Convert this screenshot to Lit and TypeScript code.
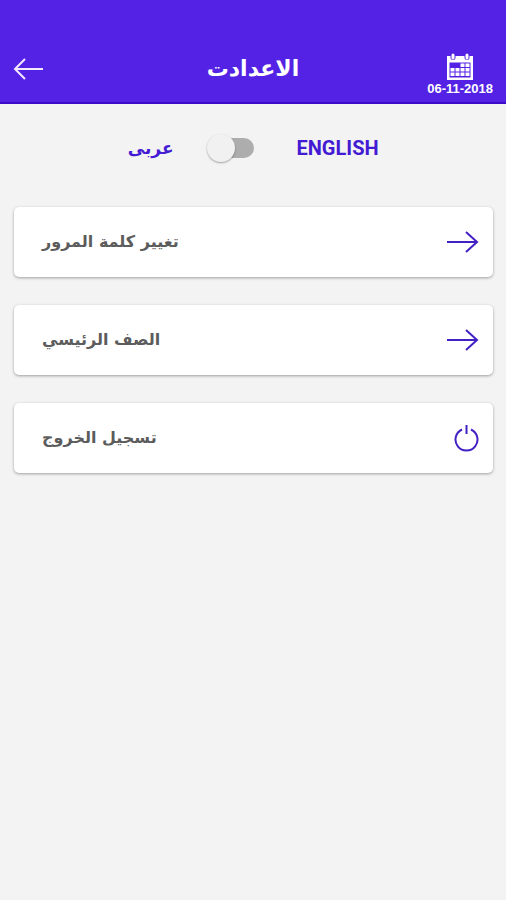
import { LitElement, html, css, svg } from "lit";
import { customElement, state } from "lit/decorators.js";

const arrowRight = svg`<path d="M1 12H31M20 2L31 12L20 22" />`;
const power = svg`<path d="M16 4.500A11 11 0 1 0 25 4.500M20.500 0V9" />`;

@customElement("app-root")
export class AppRoot extends LitElement {
  @state() private english = false;

  static styles = css`
    :host {
      display: block;
      min-height: 100vh;
      background: #f3f3f3;
      color: #431bd3;
      font-family: Roboto, "DejaVu Sans", sans-serif;
    }
    * {
      box-sizing: border-box;
    }
    .bar {
      display: grid;
      grid-template-columns: 1fr auto 1fr;
      align-items: center;
      height: 104px;
      padding: 36px 13px 0;
      background: #5422e4;
      border-bottom: 2px solid #3c0ccb;
      color: #fff;
    }
    .back {
      justify-self: start;
      display: flex;
      padding: 0;
      border: 0;
      background: none;
      color: #f3e8ff;
    }
    .title {
      margin: 0;
      font: bold 22px/32px "DejaVu Sans", sans-serif;
    }
    .date {
      justify-self: end;
      display: flex;
      flex-direction: column;
      align-items: center;
      padding-top: 12px;
      font: bold 13px/16px "Liberation Sans", sans-serif;
    }
    svg {
      display: block;
      fill: none;
      stroke: currentColor;
      stroke-width: 2;
    }
    .language {
      display: grid;
      grid-template-columns: 1fr 47px 1fr;
      align-items: center;
      height: 88px;
      padding-right: 46px;
    }
    .arabic {
      justify-self: end;
      padding-right: 33px;
      font: bold 17px/24px "DejaVu Sans", sans-serif;
    }
    .english {
      padding-left: 43px;
      font: 700 20px/24px Roboto, sans-serif;
    }
    .switch {
      appearance: none;
      display: grid;
      align-items: center;
      width: 47px;
      height: 28px;
      margin: 0;
    }
    .switch::before,
    .switch::after {
      content: "";
      grid-area: 1 / 1;
    }
    .switch::before {
      justify-self: end;
      width: 38px;
      height: 20px;
      border-radius: 10px;
      background: #adadad;
    }
    .switch::after {
      justify-self: start;
      width: 28px;
      height: 28px;
      border-radius: 50%;
      background: #f1f1f1;
      box-shadow: 0 1px 2px #00000055;
    }
    .switch:checked::before {
      justify-self: start;
    }
    .switch:checked::after {
      justify-self: end;
    }
    .menu {
      display: flex;
      flex-direction: column;
      gap: 28px;
      padding: 15px 13px 28px 14px;
    }
    .card {
      display: flex;
      align-items: center;
      justify-content: space-between;
      width: 100%;
      height: 70px;
      padding: 0 14px 0 28px;
      border: 0;
      border-radius: 5px;
      background: #fff;
      box-shadow: 0 1px 3px #00000059;
      color: #4320c4;
      text-decoration: none;
    }
    .label {
      color: #5c5c5c;
      font: bold 16px/24px "DejaVu Sans", sans-serif;
    }
  `;

  private toggle(e: Event) {
    this.english = (e.target as HTMLInputElement).checked;
  }

  render() {
    return html`
      <header class="bar">
        <button class="back" aria-label="رجوع">
          <svg width="30" height="22" viewBox="0 0 30 22">
            <path d="M30 11H2M12 1L2 11L12 21" />
          </svg>
        </button>
        <h1 class="title" lang="ar" dir="rtl">الاعدادت</h1>
        <div class="date">
          <svg width="28" height="28" viewBox="0 0 28 28">
            <path fill="#fff" stroke="none" fill-rule="evenodd"
              d="M1 3H27V27H1ZM3.500 9.500V24.500H24.500V9.500Z" />
            <path stroke="#5422e4" stroke-width="5" stroke-linecap="round" d="M7 2.500V4.500M21 2.500V4.500" />
            <path stroke-width="3" stroke-linecap="round" d="M7 2V5M21 2V5" />
            <path fill="#fff" stroke="none"
              d="M14.500 10.500H18.500V14H14.500ZM19.500 10.500H23.500V14H19.500ZM4.500 15H8.500V18.500H4.500ZM9.500 15H13.500V18.500H9.500ZM14.500 15H18.500V18.500H14.500ZM19.500 15H23.500V18.500H19.500ZM4.500 19.500H8.500V23H4.500ZM9.500 19.500H13.500V23H9.500ZM14.500 19.500H18.500V23H14.500ZM19.500 19.500H23.500V23H19.500Z" />
          </svg>
          <time datetime="2018-11-06">06-11-2018</time>
        </div>
      </header>
      <main>
        <div class="language">
          <label class="arabic" for="lang" lang="ar" dir="rtl">عربى</label>
          <input class="switch" id="lang" type="checkbox" role="switch"
            .checked=${this.english} @change=${this.toggle} />
          <label class="english" for="lang" lang="en">ENGLISH</label>
        </div>
        <nav class="menu">
          <a class="card" href="#password">
            <span class="label" lang="ar" dir="rtl">تغيير كلمة المرور</span>
            <svg width="33" height="24" viewBox="0 0 33 24">${arrowRight}</svg>
          </a>
          <a class="card" href="#home">
            <span class="label" lang="ar" dir="rtl">الصف الرئيسي</span>
            <svg width="33" height="24" viewBox="0 0 33 24">${arrowRight}</svg>
          </a>
          <button class="card">
            <span class="label" lang="ar" dir="rtl">تسجيل الخروج</span>
            <svg width="33" height="27" viewBox="0 0 33 27">${power}</svg>
          </button>
        </nav>
      </main>
    `;
  }
}
